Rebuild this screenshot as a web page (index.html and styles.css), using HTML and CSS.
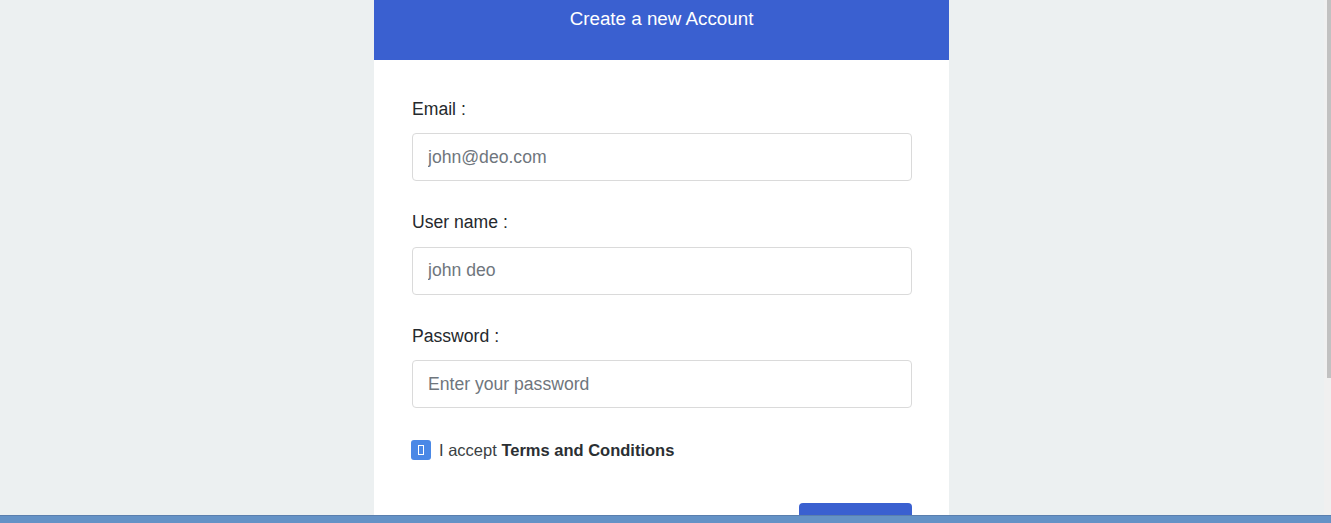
FILE: index.html
```html
<!DOCTYPE html>
<html lang="en">
<head>
<meta charset="utf-8">
<title>Create a new Account</title>
<link rel="stylesheet" href="styles.css">
</head>
<body>
<div class="page">
  <div class="card">
    <div class="card-header">Create a new Account</div>
    <form class="card-body">
      <div class="group">
        <label class="label">Email :</label>
        <input class="input" type="text" placeholder="john@deo.com">
      </div>
      <div class="group">
        <label class="label">User name :</label>
        <input class="input" type="text" placeholder="john deo">
      </div>
      <div class="group">
        <label class="label">Password :</label>
        <input class="input" type="password" placeholder="Enter your password">
      </div>
      <div class="check-row">
        <span class="checkbox"><span class="tofu"></span></span>
        <span class="check-text">I accept <b>Terms and Conditions</b></span>
      </div>
      <div class="actions">
        <button class="btn" type="button">Sign up</button>
      </div>
    </form>
  </div>
</div>
<div class="scrollbar"><div class="thumb"></div></div>
<div class="taskbar"></div>
</body>
</html>
```
FILE: styles.css
```css
html, body {
  margin: 0;
  padding: 0;
  height: 523px;
  overflow: hidden;
}
body {
  background: #ecf0f1;
  font-family: "Liberation Sans", Arial, sans-serif;
  color: #2b2f33;
}
.page {
  padding-right: 8px;
}
.card {
  width: 575px;
  margin: 0 auto;
  background: #ffffff;
  min-height: 700px;
}
.card-header {
  height: 60px;
  box-sizing: border-box;
  background: #3a60d0;
  color: #ffffff;
  font-size: 18.8px;
  line-height: 20px;
  padding-top: 9px;
  text-align: center;
}
.card-body {
  padding: 36px 37px 0 38px;
  margin: 0;
}
.group {
  display: flex;
  flex-direction: column;
  margin-bottom: 28px;
}
.label {
  font-size: 17.6px;
  line-height: 26.4px;
  margin-bottom: 11px;
  color: #25292d;
}
.input {
  box-sizing: border-box;
  width: 500px;
  height: 48px;
  border: 1px solid #dadada;
  border-radius: 4px;
  padding: 0 15px;
  font-family: "Liberation Sans", Arial, sans-serif;
  font-size: 17.6px;
  color: #333;
  outline: none;
  background: #fff;
}
.input::placeholder {
  color: #6f767d;
}
.check-row {
  display: flex;
  align-items: center;
  gap: 8px;
  margin-top: 32px;
  margin-left: -1px;
  height: 20px;
}
.checkbox {
  width: 20px;
  height: 20px;
  border-radius: 3px;
  background: #4a88e6;
  display: flex;
  align-items: center;
  justify-content: center;
}
.tofu {
  width: 4px;
  height: 8px;
  border: 1px solid #ffffff;
}
.check-text {
  font-size: 16.5px;
  color: #3a3f44;
}
.check-text b {
  color: #2b2f33;
}
.actions {
  display: flex;
  justify-content: flex-end;
  margin-top: 43px;
}
.btn {
  width: 113px;
  height: 44px;
  border: none;
  border-radius: 4px;
  background: #3a60d0;
  color: #fff;
  font-family: "Liberation Sans", Arial, sans-serif;
  font-size: 16px;
}
.scrollbar {
  position: fixed;
  top: 0;
  right: 0;
  width: 7px;
  height: 515px;
  background: #f0f0f0;
}
.thumb {
  margin-left: 3px;
  width: 4px;
  height: 378px;
  background: #c1c1c1;
}
.taskbar {
  position: fixed;
  left: 0;
  right: 0;
  bottom: 0;
  height: 7px;
  background: #6492c6;
  border-top: 1px solid #5a7fae;
}
```
